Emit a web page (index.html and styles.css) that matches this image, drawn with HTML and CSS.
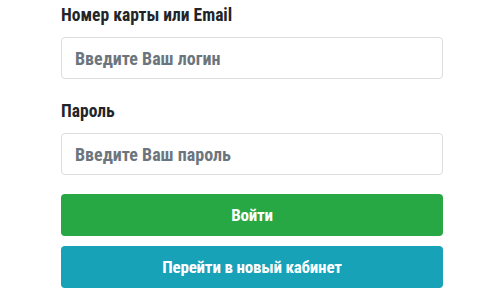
FILE: index.html
```html
<!DOCTYPE html>
<html lang="ru">
<head>
    <meta charset="UTF-8">
    <meta name="viewport" content="width=device-width, initial-scale=1.0">
    <title>Вход</title>
    <link rel="stylesheet" href="styles.css">
</head>
<body>
    <form class="login-form">
        <div class="form-group">
            <label for="login">Номер карты или Email</label>
            <input type="text" id="login" placeholder="Введите Ваш логин">
        </div>

        <div class="form-group">
            <label for="password">Пароль</label>
            <input type="password" id="password" placeholder="Введите Ваш пароль">
        </div>

        <button type="submit" class="btn btn-green">Войти</button>
        <button type="button" class="btn btn-teal">Перейти в новый кабинет</button>
    </form>
</body>
</html>
```

FILE: styles.css
```css
body {
    margin: 0;
    background: #fff;
    font-family: 'Roboto Condensed', 'Open Sans Condensed', sans-serif;
    font-weight: bold;
    color: #212529;
}
.login-form {
    width: 382px;
    margin-left: 61px;
    display: flex;
    flex-direction: column;
}
.form-group {
    margin-bottom: 17px;
}
.form-group:last-of-type {
    margin-bottom: 19px;
}
label {
    display: block;
    font-size: 17.5px;
    line-height: 23px;
    padding-top: 4px;
    margin-bottom: 10px;
}
input {
    display: block;
    box-sizing: border-box;
    width: 100%;
    height: 42px;
    padding: 0 13px;
    border: 1px solid #dcdfe2;
    border-radius: 4px;
    font-family: inherit;
    font-weight: bold;
    font-size: 18px;
    color: #495057;
}
input::placeholder {
    color: #6c757d;
}
.btn {
    height: 42px;
    border: none;
    border-radius: 4px;
    color: #fff;
    font-family: inherit;
    font-weight: bold;
    font-size: 17px;
    letter-spacing: -0.2px;
    cursor: pointer;
}
.btn-green {
    background: #28a745;
    margin-bottom: 10px;
}
.btn-teal {
    background: #17a2b8;
}
```
